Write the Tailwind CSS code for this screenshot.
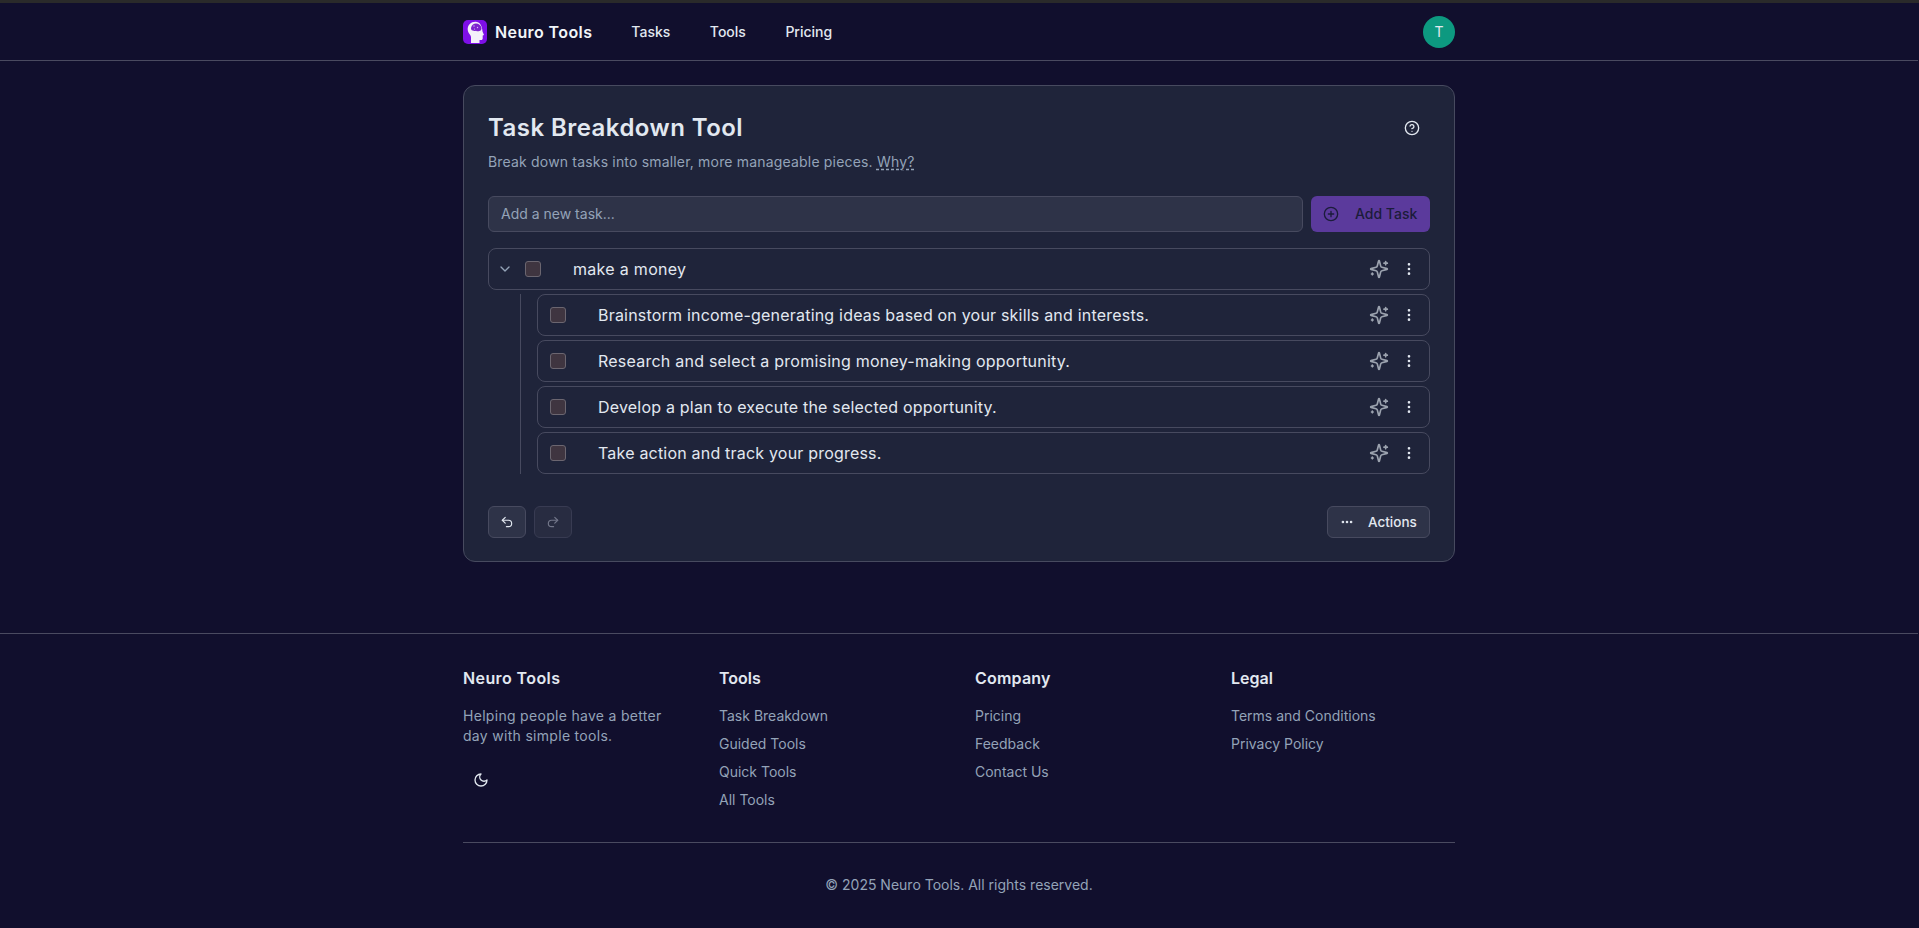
<!DOCTYPE html>
<html lang="en">
<head>
    <meta charset="UTF-8">
    <title>Neuro Tools</title>
    <script src="https://cdn.jsdelivr.net/npm/@tailwindcss/browser@4"></script>
</head>
<body class="bg-[#110f2d] text-[#e2e8f0] font-['Inter',sans-serif] min-h-[928px] border-t-[3px] border-[#2a2a2a] pr-px">

    <header class="h-[58px] border-b border-[#4a4a60]">
        <div class="w-[992px] mx-auto h-full flex items-center">
            <svg class="w-6 h-6" viewBox="0 0 24 24">
                <rect width="24" height="24" rx="5" fill="#7e0fe8"/>
                <path d="M12.500 1.800C7.800 1.800 4.700 5 4.700 9.300c0 2.300 1 4 2.300 5.500.7.9 1 1.700 1 2.700V23h8.500v-3h1.700c.9 0 1.500-.7 1.500-1.500v-3l1.300-.6-1.500-3.400C19.200 6 16.800 1.800 12.500 1.800z" fill="#f4f0fa"/>
                <path d="M8.200 7.200c.6-2 2.500-3.600 4.800-3.600 2.700 0 4.900 1.700 5.500 4.300.3 1.500-.7 3-2.200 3.100-1.200.5-2.500.3-3.300-.3-1 .6-2.400.5-3.200-.1-1.400.1-2.200-1.800-1.600-3.400z" fill="#7e22ce"/>
                <circle cx="11" cy="6" r=".7" fill="#d8b4fe"/>
                <circle cx="14.500" cy="7.500" r=".7" fill="#d8b4fe"/>
                <circle cx="11.500" cy="9" r=".6" fill="#d8b4fe"/>
            </svg>
            <span class="ml-2 text-base font-semibold text-[#f1f5f9] tracking-[0.4px]">Neuro Tools</span>
            <nav class="ml-[39px] flex gap-[39.500px] text-sm font-medium text-[#e2e8f0]">
                <a>Tasks</a>
                <a>Tools</a>
                <a>Pricing</a>
            </nav>
            <div class="ml-auto w-8 h-8 rounded-full bg-[#0d9980] flex items-center justify-center text-sm text-[#e2e8f0]">T</div>
        </div>
    </header>

    <main class="w-[992px] mx-auto mt-6 h-[477px] rounded-xl border border-[#474a5f] bg-[#1f243a] px-6 pt-[26px]">
        <div class="flex items-start justify-between">
            <div>
                <h1 class="text-2xl font-semibold leading-8 text-[#e2e8f0] tracking-[0.45px]">Task Breakdown Tool</h1>
                <p class="mt-2 text-sm leading-5 tracking-[0.18px] text-[#94a3b8]">Break down tasks into smaller, more manageable pieces. <span class="underline decoration-dashed underline-offset-2">Why?</span></p>
            </div>
            <button class="w-8 h-8 mr-[2px] flex items-center justify-center text-[#e2e8f0]">
                <svg class="w-4 h-4" viewBox="0 0 24 24" fill="none" stroke="currentColor" stroke-width="2" stroke-linecap="round" stroke-linejoin="round"><circle cx="12" cy="12" r="10"/><path d="M9.090 9a3 3 0 0 1 5.830 1c0 2-3 3-3 3"/><path d="M12 17h.01"/></svg>
            </button>
        </div>

        <div class="mt-6 flex gap-2">
            <div class="flex-1 h-9 rounded-md border border-[#474a5f] bg-[#2e3348] px-3 flex items-center text-sm text-[#94a3b8]">Add a new task...</div>
            <button class="w-[119px] h-9 rounded-md bg-[#5b3a9c] flex items-center pl-3 text-sm font-medium text-[#1b1c3a]">
                <svg class="w-4 h-4" viewBox="0 0 24 24" fill="none" stroke="currentColor" stroke-width="2" stroke-linecap="round"><circle cx="12" cy="12" r="10"/><path d="M8 12h8M12 8v8"/></svg>
                <span class="ml-4">Add Task</span>
            </button>
        </div>

        <div class="mt-4 flex flex-col gap-1">
            <div class="h-[42px] rounded-lg border border-[#474a5f] flex items-center">
                <svg class="w-4 h-4 ml-[8px] text-[#94a3b8]" viewBox="0 0 24 24" fill="none" stroke="currentColor" stroke-width="2" stroke-linecap="round" stroke-linejoin="round"><path d="m6 9 6 6 6-6"/></svg>
                <span class="ml-[12px] w-4 h-4 rounded-[3px] border border-[#6b6670] bg-[#3f3540]"></span>
                <span class="ml-8 text-base tracking-[0.3px] text-[#e2e8f0]">make a money</span>
                <svg class="ml-auto w-5 h-5 text-[#9ca3af]" viewBox="0 0 24 24" fill="none" stroke="currentColor" stroke-width="2" stroke-linecap="round" stroke-linejoin="round"><path d="M9.937 15.500A2 2 0 0 0 8.500 14.063l-6.135-1.582a.5.5 0 0 1 0-.962L8.500 9.936A2 2 0 0 0 9.937 8.500l1.582-6.135a.5.5 0 0 1 .963 0L14.063 8.500A2 2 0 0 0 15.500 9.937l6.135 1.581a.5.5 0 0 1 0 .964L15.500 14.063a2 2 0 0 0-1.437 1.437l-1.582 6.135a.5.5 0 0 1-.963 0z"/><path d="M20 3v4M22 5h-4M4 17v2M5 18H3"/></svg>
                <svg class="ml-3 mr-3 w-4 h-4 text-[#e2e8f0]" viewBox="0 0 24 24" fill="none" stroke="currentColor" stroke-width="2" stroke-linecap="round"><circle cx="12" cy="12" r="1"/><circle cx="12" cy="5" r="1"/><circle cx="12" cy="19" r="1"/></svg>
            </div>
            <div class="ml-8 border-l border-[#474a5f] pl-4 flex flex-col gap-1">
                <div class="h-[42px] rounded-lg border border-[#474a5f] flex items-center">
                    <span class="ml-[12px] w-4 h-4 rounded-[3px] border border-[#6b6670] bg-[#3f3540]"></span>
                    <span class="ml-8 text-base tracking-[0.2px] text-[#e2e8f0]">Brainstorm income-generating ideas based on your skills and interests.</span>
                    <svg class="ml-auto w-5 h-5 text-[#9ca3af]" viewBox="0 0 24 24" fill="none" stroke="currentColor" stroke-width="2" stroke-linecap="round" stroke-linejoin="round"><path d="M9.937 15.500A2 2 0 0 0 8.500 14.063l-6.135-1.582a.5.5 0 0 1 0-.962L8.500 9.936A2 2 0 0 0 9.937 8.500l1.582-6.135a.5.5 0 0 1 .963 0L14.063 8.500A2 2 0 0 0 15.500 9.937l6.135 1.581a.5.5 0 0 1 0 .964L15.500 14.063a2 2 0 0 0-1.437 1.437l-1.582 6.135a.5.5 0 0 1-.963 0z"/><path d="M20 3v4M22 5h-4M4 17v2M5 18H3"/></svg>
                    <svg class="ml-3 mr-3 w-4 h-4 text-[#e2e8f0]" viewBox="0 0 24 24" fill="none" stroke="currentColor" stroke-width="2" stroke-linecap="round"><circle cx="12" cy="12" r="1"/><circle cx="12" cy="5" r="1"/><circle cx="12" cy="19" r="1"/></svg>
                </div>
                <div class="h-[42px] rounded-lg border border-[#474a5f] flex items-center">
                    <span class="ml-[12px] w-4 h-4 rounded-[3px] border border-[#6b6670] bg-[#3f3540]"></span>
                    <span class="ml-8 text-base tracking-[0.23px] text-[#e2e8f0]">Research and select a promising money-making opportunity.</span>
                    <svg class="ml-auto w-5 h-5 text-[#9ca3af]" viewBox="0 0 24 24" fill="none" stroke="currentColor" stroke-width="2" stroke-linecap="round" stroke-linejoin="round"><path d="M9.937 15.500A2 2 0 0 0 8.500 14.063l-6.135-1.582a.5.5 0 0 1 0-.962L8.500 9.936A2 2 0 0 0 9.937 8.500l1.582-6.135a.5.5 0 0 1 .963 0L14.063 8.500A2 2 0 0 0 15.500 9.937l6.135 1.581a.5.5 0 0 1 0 .964L15.500 14.063a2 2 0 0 0-1.437 1.437l-1.582 6.135a.5.5 0 0 1-.963 0z"/><path d="M20 3v4M22 5h-4M4 17v2M5 18H3"/></svg>
                    <svg class="ml-3 mr-3 w-4 h-4 text-[#e2e8f0]" viewBox="0 0 24 24" fill="none" stroke="currentColor" stroke-width="2" stroke-linecap="round"><circle cx="12" cy="12" r="1"/><circle cx="12" cy="5" r="1"/><circle cx="12" cy="19" r="1"/></svg>
                </div>
                <div class="h-[42px] rounded-lg border border-[#474a5f] flex items-center">
                    <span class="ml-[12px] w-4 h-4 rounded-[3px] border border-[#6b6670] bg-[#3f3540]"></span>
                    <span class="ml-8 text-base tracking-[0.2px] text-[#e2e8f0]">Develop a plan to execute the selected opportunity.</span>
                    <svg class="ml-auto w-5 h-5 text-[#9ca3af]" viewBox="0 0 24 24" fill="none" stroke="currentColor" stroke-width="2" stroke-linecap="round" stroke-linejoin="round"><path d="M9.937 15.500A2 2 0 0 0 8.500 14.063l-6.135-1.582a.5.5 0 0 1 0-.962L8.500 9.936A2 2 0 0 0 9.937 8.500l1.582-6.135a.5.5 0 0 1 .963 0L14.063 8.500A2 2 0 0 0 15.500 9.937l6.135 1.581a.5.5 0 0 1 0 .964L15.500 14.063a2 2 0 0 0-1.437 1.437l-1.582 6.135a.5.5 0 0 1-.963 0z"/><path d="M20 3v4M22 5h-4M4 17v2M5 18H3"/></svg>
                    <svg class="ml-3 mr-3 w-4 h-4 text-[#e2e8f0]" viewBox="0 0 24 24" fill="none" stroke="currentColor" stroke-width="2" stroke-linecap="round"><circle cx="12" cy="12" r="1"/><circle cx="12" cy="5" r="1"/><circle cx="12" cy="19" r="1"/></svg>
                </div>
                <div class="h-[42px] rounded-lg border border-[#474a5f] flex items-center">
                    <span class="ml-[12px] w-4 h-4 rounded-[3px] border border-[#6b6670] bg-[#3f3540]"></span>
                    <span class="ml-8 text-base tracking-[0.2px] text-[#e2e8f0]">Take action and track your progress.</span>
                    <svg class="ml-auto w-5 h-5 text-[#9ca3af]" viewBox="0 0 24 24" fill="none" stroke="currentColor" stroke-width="2" stroke-linecap="round" stroke-linejoin="round"><path d="M9.937 15.500A2 2 0 0 0 8.500 14.063l-6.135-1.582a.5.5 0 0 1 0-.962L8.500 9.936A2 2 0 0 0 9.937 8.500l1.582-6.135a.5.5 0 0 1 .963 0L14.063 8.500A2 2 0 0 0 15.500 9.937l6.135 1.581a.5.5 0 0 1 0 .964L15.500 14.063a2 2 0 0 0-1.437 1.437l-1.582 6.135a.5.5 0 0 1-.963 0z"/><path d="M20 3v4M22 5h-4M4 17v2M5 18H3"/></svg>
                    <svg class="ml-3 mr-3 w-4 h-4 text-[#e2e8f0]" viewBox="0 0 24 24" fill="none" stroke="currentColor" stroke-width="2" stroke-linecap="round"><circle cx="12" cy="12" r="1"/><circle cx="12" cy="5" r="1"/><circle cx="12" cy="19" r="1"/></svg>
                </div>
            </div>
        </div>

        <div class="mt-8 flex items-center gap-2">
            <button class="w-[38px] h-8 rounded-md border border-[#474a5f] bg-[#2e3348] flex items-center justify-center text-[#e2e8f0]">
                <svg class="w-[14px] h-[14px]" viewBox="0 0 24 24" fill="none" stroke="currentColor" stroke-width="2" stroke-linecap="round" stroke-linejoin="round"><path d="M9 14 4 9l5-5"/><path d="M4 9h10.500a5.500 5.500 0 0 1 0 11H11"/></svg>
            </button>
            <button class="w-[38px] h-8 rounded-md border border-[#383b52] bg-[#282c41] flex items-center justify-center text-[#73778a]">
                <svg class="w-[14px] h-[14px]" viewBox="0 0 24 24" fill="none" stroke="currentColor" stroke-width="2" stroke-linecap="round" stroke-linejoin="round"><path d="m15 14 5-5-5-5"/><path d="M20 9H9.500a5.500 5.500 0 0 0 0 11H13"/></svg>
            </button>
            <button class="ml-auto w-[103px] h-8 rounded-md border border-[#474a5f] bg-[#2e3348] flex items-center pl-3 text-[13.500px] font-medium text-[#e2e8f0]">
                <svg class="w-[14px] h-[14px]" viewBox="0 0 24 24" fill="none" stroke="currentColor" stroke-width="2.500" stroke-linecap="round"><circle cx="12" cy="12" r="1"/><circle cx="19" cy="12" r="1"/><circle cx="5" cy="12" r="1"/></svg>
                <span class="ml-[14px]">Actions</span>
            </button>
        </div>
    </main>

    <footer class="mt-[71px] border-t border-[#4a4a60]">
        <div class="w-[992px] mx-auto pt-8">
            <div class="grid grid-cols-4 gap-8">
                <div>
                    <h3 class="text-base font-semibold leading-6 tracking-[0.4px] text-[#e2e8f0]">Neuro Tools</h3>
                    <p class="mt-4 text-sm leading-5 tracking-[0.3px] text-[#94a3b8]">Helping people have a better<br>day with simple tools.</p>
                    <div class="mt-4 w-9 h-9 flex items-center justify-center text-[#e2e8f0]">
                        <svg class="w-4 h-4" viewBox="0 0 24 24" fill="none" stroke="currentColor" stroke-width="2" stroke-linecap="round" stroke-linejoin="round"><path d="M12 3a6 6 0 0 0 9 9 9 9 0 1 1-9-9Z"/></svg>
                    </div>
                </div>
                <div>
                    <h3 class="text-base font-semibold leading-6 text-[#e2e8f0]">Tools</h3>
                    <ul class="mt-4 flex flex-col gap-2 text-sm leading-5 text-[#94a3b8]">
                        <li>Task Breakdown</li>
                        <li>Guided Tools</li>
                        <li>Quick Tools</li>
                        <li>All Tools</li>
                    </ul>
                </div>
                <div>
                    <h3 class="text-base font-semibold leading-6 tracking-[0.2px] text-[#e2e8f0]">Company</h3>
                    <ul class="mt-4 flex flex-col gap-2 text-sm leading-5 text-[#94a3b8]">
                        <li>Pricing</li>
                        <li>Feedback</li>
                        <li>Contact Us</li>
                    </ul>
                </div>
                <div>
                    <h3 class="text-base font-semibold leading-6 text-[#e2e8f0]">Legal</h3>
                    <ul class="mt-4 flex flex-col gap-2 text-sm leading-5 text-[#94a3b8]">
                        <li>Terms and Conditions</li>
                        <li>Privacy Policy</li>
                    </ul>
                </div>
            </div>
            <div class="mt-8 border-t border-[#4a4a60] pt-8 text-center text-sm leading-5 text-[#94a3b8]">© 2025 Neuro Tools. All rights reserved.</div>
        </div>
    </footer>
</body>
</html>
